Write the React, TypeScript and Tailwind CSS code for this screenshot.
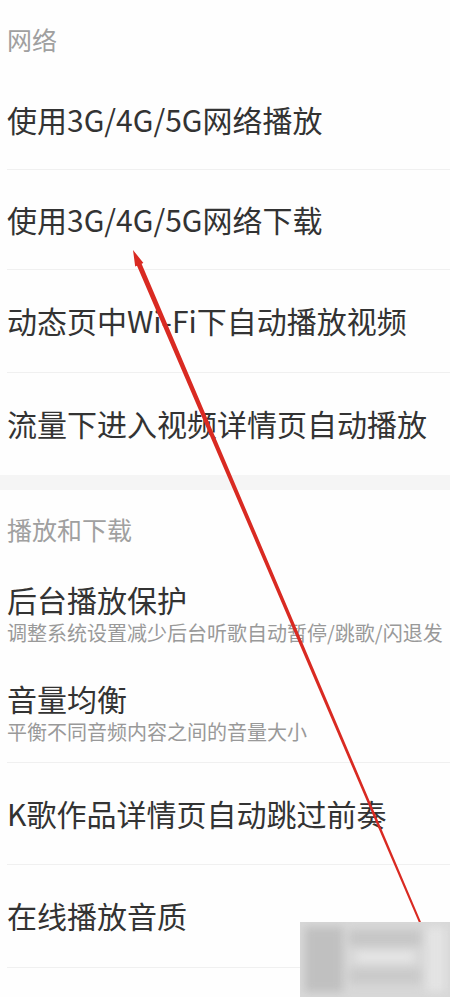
import React from "react";

type Item = { title: string; desc?: string; h: string; divider?: boolean };

const network: Item[] = [
  { title: "使用3G/4G/5G网络播放", h: "h-[100px]", divider: true },
  { title: "使用3G/4G/5G网络下载", h: "h-[100px]", divider: true },
  { title: "动态页中Wi-Fi下自动播放视频", h: "h-[103px]", divider: true },
  { title: "流量下进入视频详情页自动播放", h: "h-[102px]" },
];

const playback: Item[] = [
  { title: "后台播放保护", desc: "调整系统设置减少后台听歌自动暂停/跳歌/闪退发", h: "h-[100px]" },
  { title: "音量均衡", desc: "平衡不同音频内容之间的音量大小", h: "h-[98px]", divider: true },
  { title: "K歌作品详情页自动跳过前奏", h: "h-[102px]", divider: true },
  { title: "在线播放音质", h: "h-[103px]", divider: true },
];

function Row({ item }: { item: Item }) {
  return (
    <div
      className={`${item.h} ml-[7px] flex flex-col justify-center ${
        item.divider ? "border-b border-[#f0f0f0]" : ""
      }`}
    >
      <div className="text-[30px] leading-[36px] text-[#333] whitespace-nowrap -mt-[2px]">{item.title}</div>
      {item.desc && (
        <div className="text-[20px] leading-[28px] text-[#999] whitespace-nowrap mt-[2px]">
          {item.desc}
        </div>
      )}
    </div>
  );
}

function Header({ label, h }: { label: string; h: string }) {
  return (
    <div className={`${h} pl-[7px] pt-[24px]`}>
      <div className="text-[25px] leading-[30px] text-[#a0a0a0]">{label}</div>
    </div>
  );
}

export default function App() {
  return (
    <div className="relative w-[450px] h-[997px] overflow-hidden bg-[#fefefe] font-['Noto_Sans_CJK_SC','Noto_Sans',sans-serif]">
      <Header label="网络" h="h-[70px]" />
      {network.map((it) => (
        <Row key={it.title} item={it} />
      ))}

      <div className="h-[15px] bg-[#f5f5f5]" />

      <Header label="播放和下载" h="h-[75px]" />
      {playback.map((it) => (
        <Row key={it.title} item={it} />
      ))}

      {/* red annotation arrow */}
      <svg className="absolute inset-0 pointer-events-none" width="450" height="997" viewBox="0 0 450 997">
        <polygon
          points="133,250 143.4,262.9 141.6,263.7 422.9,926.6 421.1,927.4 137,265.7 135.2,266.5"
          fill="#d92a22"
        />
      </svg>

      {/* blurred watermark stamp */}
      <div className="absolute left-[300px] top-[922px] w-[150px] h-[75px] overflow-hidden bg-[#d8d8d8]">
        <div className="flex h-full gap-[6px] p-[5px] blur-[4px]">
          <div className="w-[38px] bg-[#c0c0c0]" />
          <div className="flex flex-1 flex-col gap-[6px] py-[3px]">
            <div className="h-[16px] bg-[#c6c6c6]" />
            <div className="h-[10px] mx-[8px] bg-[#e6e6e6]" />
            <div className="h-[16px] bg-[#cacaca]" />
          </div>
          <div className="w-[18px] bg-[#e4e4e4]" />
        </div>
      </div>
    </div>
  );
}
